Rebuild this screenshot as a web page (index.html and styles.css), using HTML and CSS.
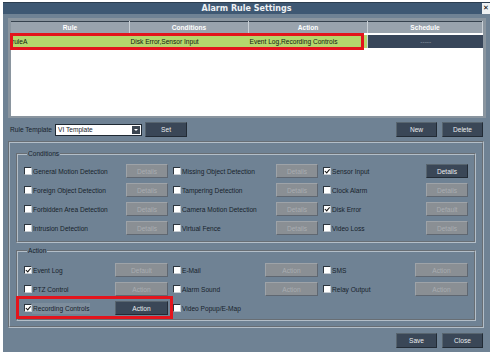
FILE: index.html
```html
<!DOCTYPE html>
<html>
    <head>
        <title>Alarm Rule Settings</title>
        <link rel="stylesheet" href="styles.css">
    </head>
    <body>
        <div class="dialog">
            <div class="titleBar">
                <span class="title">Alarm Rule Settings</span>
                <span class="closeBox">&#10005;</span>
            </div>

            <!-- rule list -->
            <div class="ruleList">
                <table class="ruleTable">
                    <tr>
                        <th class="colRule">Rule</th>
                        <th class="colCond">Conditions</th>
                        <th class="colAction">Action</th>
                        <th>Schedule</th>
                    </tr>
                    <tr class="selected">
                        <td>ruleA</td>
                        <td>Disk Error,Sensor Input</td>
                        <td>Event Log,Recording Controls</td>
                        <td class="schedule">-----</td>
                    </tr>
                </table>
                <div class="mark markRow"></div>
            </div>

            <div class="templateRow">
                <label class="templateLabel">Rule Template</label>
                <div class="select">
                    <span class="selectText">VI Template</span>
                    <span class="arrow"></span>
                </div>
                <button type="button" class="btn dark setBtn">Set</button>
                <span class="spacer"></span>
                <button type="button" class="btn dark smallBtn">New</button>
                <button type="button" class="btn dark smallBtn">Delete</button>
            </div>

            <div class="groups">
                <fieldset class="group">
                    <legend>Conditions</legend>
                    <div class="grid">
                        <div class="item"><span class="check"></span><span class="name">General Motion Detection</span><button type="button" class="btn off details">Details</button></div>
                        <div class="item"><span class="check"></span><span class="name">Missing Object Detection</span><button type="button" class="btn off details">Details</button></div>
                        <div class="item"><span class="check on"></span><span class="name">Sensor Input</span><button type="button" class="btn dark details">Details</button></div>

                        <div class="item"><span class="check"></span><span class="name">Foreign Object Detection</span><button type="button" class="btn off details">Details</button></div>
                        <div class="item"><span class="check"></span><span class="name">Tampering Detection</span><button type="button" class="btn off details">Details</button></div>
                        <div class="item"><span class="check"></span><span class="name">Clock Alarm</span><button type="button" class="btn off details">Details</button></div>

                        <div class="item"><span class="check"></span><span class="name">Forbidden Area Detection</span><button type="button" class="btn off details">Details</button></div>
                        <div class="item"><span class="check"></span><span class="name">Camera Motion Detection</span><button type="button" class="btn off details">Details</button></div>
                        <div class="item"><span class="check on"></span><span class="name">Disk Error</span><button type="button" class="btn off details">Default</button></div>

                        <div class="item"><span class="check"></span><span class="name">Intrusion Detection</span><button type="button" class="btn off details">Details</button></div>
                        <div class="item"><span class="check"></span><span class="name">Virtual Fence</span><button type="button" class="btn off details">Details</button></div>
                        <div class="item"><span class="check"></span><span class="name">Video Loss</span><button type="button" class="btn off details">Details</button></div>
                    </div>
                </fieldset>

                <fieldset class="group actionGroup">
                    <legend>Action</legend>
                    <div class="grid">
                        <div class="item"><span class="check on"></span><span class="name">Event Log</span><button type="button" class="btn off action">Default</button></div>
                        <div class="item"><span class="check"></span><span class="name">E-Mail</span><button type="button" class="btn off action">Action</button></div>
                        <div class="item"><span class="check"></span><span class="name">SMS</span><button type="button" class="btn off action">Action</button></div>

                        <div class="item"><span class="check"></span><span class="name">PTZ Control</span><button type="button" class="btn off action">Action</button></div>
                        <div class="item"><span class="check"></span><span class="name">Alarm Sound</span><button type="button" class="btn off action">Action</button></div>
                        <div class="item"><span class="check"></span><span class="name">Relay Output</span><button type="button" class="btn off action">Action</button></div>

                        <div class="item marked"><span class="check on"></span><span class="name"><span class="focus">Recording Controls</span></span><button type="button" class="btn dark action">Action</button><div class="mark markItem"></div></div>
                        <div class="item"><span class="check"></span><span class="name">Video Popup/E-Map</span></div>
                    </div>
                </fieldset>
            </div>

            <div class="footer">
                <button type="button" class="btn dark smallBtn">Save</button>
                <button type="button" class="btn dark smallBtn">Close</button>
            </div>
        </div>
    </body>
</html>
```

FILE: styles.css
```css
body {
    margin: 0;
    background-color: #ffffff;
    font-family: "Liberation Sans", Arial, sans-serif;
    font-size: 6.6px;
    color: #18222c;
}

.dialog {
    box-sizing: border-box;
    width: 487px;
    height: 350px;
    margin: 2px 0 0 3px;
    background-color: #6f8294;
    display: flex;
    flex-direction: column;
}

.titleBar {
    display: flex;
    height: 12px;
    background-color: #3e5873;
    border-top: 1px solid #2c3e50;
    box-sizing: border-box;
}

.title {
    flex: 1;
    text-align: center;
    padding-left: 8px;
    font-family: "DejaVu Sans", sans-serif;
    font-weight: bold;
    font-size: 8px;
    line-height: 11px;
    color: #eef1f4;
}

.closeBox {
    width: 8px;
    background-color: #eef1f3;
    font-family: "DejaVu Sans", sans-serif;
    font-weight: bold;
    font-size: 7px;
    line-height: 11px;
    text-align: center;
    color: #000000;
}

/* rule list */
.ruleList {
    position: relative;
    box-sizing: border-box;
    width: 478px;
    height: 100px;
    margin: 4px 0 0 5px;
    background-color: #ffffff;
    border: 3px solid #8a959f;
    border-bottom-width: 2px;
}

.ruleTable {
    width: 100%;
    border-collapse: collapse;
    table-layout: fixed;
}

.ruleTable th {
    height: 11px;
    padding: 0;
    background-color: #99a3ad;
    color: #ffffff;
    font-weight: bold;
    border-top: 1px solid #36424e;
    border-right: 1px solid #c9d0d6;
    border-bottom: 1px solid #707b86;
}

.colRule,
.colCond,
.colAction {
    width: 118px;
}

.ruleTable td {
    height: 13px;
    padding: 0 0 0 1px;
    border-top: 2px solid #ffffff;
    white-space: nowrap;
    overflow: hidden;
}

.selected td {
    background-color: #b4d76c;
    color: #111a10;
}

.selected .schedule {
    background-color: #38465a;
    color: #8794a1;
    text-align: center;
    border-left: 1px solid #c9d0d6;
}

.mark {
    position: absolute;
    box-sizing: border-box;
    border: 3px solid #e3141c;
}

.markRow {
    left: -1px;
    top: 12px;
    width: 354px;
    height: 17px;
}

/* template row */
.templateRow {
    display: flex;
    align-items: center;
    height: 15px;
    margin: 4px 7px 0 7px;
}

.templateLabel {
    margin-right: 3px;
}

.select {
    box-sizing: border-box;
    display: flex;
    align-items: center;
    width: 87px;
    height: 12px;
    background-color: #ffffff;
    border: 1px solid #1f2933;
}

.selectText {
    flex: 1;
    padding-left: 2px;
}

.arrow {
    position: relative;
    width: 8px;
    height: 8px;
    margin-right: 1px;
    background-color: #3b4550;
}

.arrow::after {
    content: "";
    position: absolute;
    left: 2px;
    top: 3px;
    border-left: 2px solid transparent;
    border-right: 2px solid transparent;
    border-top: 2px solid #ffffff;
}

.spacer {
    flex: 1;
}

.btn {
    box-sizing: border-box;
    height: 14px;
    padding: 0;
    font-family: inherit;
    font-size: 6.6px;
    border: 1px solid;
}

.off {
    background-color: #8a8f94;
    color: #a9adb1;
    border-color: #9ea3a8 #5f6771 #5f6771 #9ea3a8;
}

.dark {
    background-color: #3a4757;
    color: #e8ebee;
    border-color: #58656f #222b35 #222b35 #58656f;
}

.setBtn {
    width: 42px;
    height: 15px;
    margin-left: 3px;
}

.smallBtn {
    width: 41px;
    height: 15px;
    margin-left: 5px;
}

/* condition / action groups */
.groups {
    margin: 4px 6px 0 5px;
    padding: 6px 6px 5px 6px;
    border: 2px groove #b3bec8;
}

.group {
    margin: 0;
    min-width: 0;
    padding: 6px 6px 6px 6px;
    border: 2px groove #b3bec8;
}

.group legend {
    margin-left: 3px;
    padding: 0 1px;
    line-height: 9px;
}

.actionGroup {
    margin-top: 3px;
    padding-top: 8px;
    padding-bottom: 4px;
}

.grid {
    display: grid;
    grid-template-columns: 144px 145px 145px;
    grid-auto-rows: 14px;
    column-gap: 5px;
    row-gap: 5px;
}

.item {
    display: flex;
    align-items: center;
}

.marked {
    position: relative;
}

.markItem {
    left: -8px;
    top: -5px;
    right: -5px;
    bottom: -4px;
}

.check {
    position: relative;
    box-sizing: border-box;
    width: 8px;
    height: 8px;
    margin-right: 1px;
    background-color: #ffffff;
    border: 1px solid;
    border-color: #2b343d #c6ccd2 #c6ccd2 #2b343d;
}

.check.on::after {
    content: "";
    position: absolute;
    left: 1.5px;
    top: -0.5px;
    width: 1.5px;
    height: 3.5px;
    border: solid #111111;
    border-width: 0 1.5px 1.5px 0;
    transform: rotate(40deg);
}

.name {
    flex: 1;
    white-space: nowrap;
}

.focus {
    display: inline-block;
    padding: 2px 1px;
    margin-left: -1px;
    background-color: #7d8d9c;
}

.details {
    width: 42px;
}

.action {
    width: 53px;
}

.footer {
    display: flex;
    justify-content: flex-end;
    margin: 5px 7px 0 0;
}
```
